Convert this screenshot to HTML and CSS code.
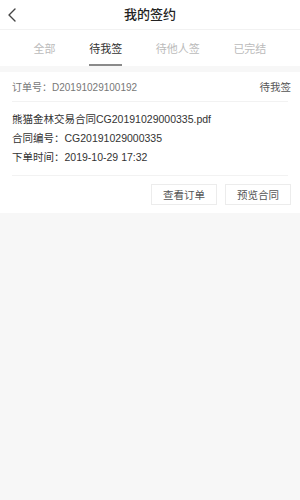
FILE: index.html
```html
<!DOCTYPE html>
<html lang="zh">
<head>
<meta charset="utf-8">
<title>我的签约</title>
<link rel="stylesheet" href="styles.css">
</head>
<body>
<div class="page">
  <header class="topbar">
    <span class="back">
      <svg width="10" height="14" viewBox="0 0 10 14"><path d="M8 1 L2 7 L8 13" fill="none" stroke="#444" stroke-width="1.4" stroke-linecap="round" stroke-linejoin="round"/></svg>
    </span>
    <h1 class="title">我的签约</h1>
  </header>
  <nav class="tabs">
    <span class="tab">全部</span>
    <span class="tab active">待我签</span>
    <span class="tab">待他人签</span>
    <span class="tab">已完结</span>
  </nav>
  <section class="card">
    <div class="order-row">
      <span class="order-no">订单号：D20191029100192</span>
      <span class="status">待我签</span>
    </div>
    <div class="info">
      <p class="line">熊猫金林交易合同CG20191029000335.pdf</p>
      <p class="line">合同编号：CG20191029000335</p>
      <p class="line">下单时间：2019-10-29 17:32</p>
    </div>
    <div class="actions">
      <span class="btn">查看订单</span>
      <span class="btn">预览合同</span>
    </div>
  </section>
</div>
</body>
</html>
```

FILE: styles.css
```css
html, body {
  margin: 0;
  padding: 0;
}
body {
  background: #f7f7f7;
  font-family: "Liberation Sans", "Noto Sans CJK SC", sans-serif;
  color: #333;
  width: 300px;
  height: 500px;
}
.page {
  display: flex;
  flex-direction: column;
}
.topbar {
  position: relative;
  height: 30px;
  background: #fff;
  border-bottom: 1px solid #f2f2f2;
  display: flex;
  align-items: center;
  justify-content: center;
  box-sizing: border-box;
}
.back {
  position: absolute;
  left: 7px;
  top: 8px;
  display: flex;
}
.title {
  margin: 0;
  font-size: 13px;
  font-weight: 500;
  color: #222;
  line-height: 30px;
}
.tabs {
  height: 36px;
  background: #fff;
  display: flex;
  justify-content: space-evenly;
  align-items: stretch;
}
.tab {
  font-size: 11px;
  color: #bbb;
  display: flex;
  align-items: center;
  padding-top: 1px;
  box-sizing: border-box;
  border-bottom: 2px solid transparent;
}
.tab.active {
  color: #333;
  border-bottom-color: #8a8a8a;
}
.card {
  margin-top: 6px;
  background: #fff;
  padding: 0 12px;
}
.order-row {
  height: 29px;
  display: flex;
  align-items: center;
  justify-content: space-between;
  border-bottom: 1px solid #f2f2f2;
  font-size: 10px;
}
.order-no {
  color: #777;
}
.status {
  color: #555;
  font-size: 10.5px;
  margin-right: -3px;
}
.info {
  padding: 8px 0 8px;
  border-bottom: 1px solid #f2f2f2;
}
.line {
  margin: 0;
  font-size: 10.5px;
  line-height: 19px;
  color: #333;
}
.actions {
  display: flex;
  justify-content: flex-end;
  gap: 8px;
  padding: 8px 0 8px;
  margin-right: -3px;
}
.btn {
  width: 64px;
  height: 19px;
  border: 1px solid #ececec;
  font-size: 10.5px;
  color: #555;
  display: flex;
  align-items: center;
  justify-content: center;
}
```
